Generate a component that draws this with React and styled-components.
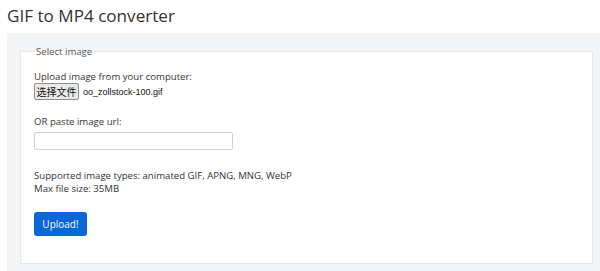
import React from "react";
import styled, { createGlobalStyle } from "styled-components";

const GlobalStyle = createGlobalStyle`
  html, body {
    margin: 0;
    padding: 0;
    background: #ffffff;
    overflow: hidden;
  }
  body {
    font-family: "Open Sans", "Noto Sans", sans-serif;
    color: #333333;
  }
`;

const Page = styled.div`
  padding: 4px 0 0 7px;
  width: 600px;
`;

const Title = styled.h1`
  margin: 0 0 6px;
  font-size: 17.1px;
  font-weight: 400;
  line-height: 23px;
  color: #333333;
`;

const Panel = styled.div`
  width: 572px;
  background: #f3f4f6;
  padding: 12px 13px 7px;
`;

const Fieldset = styled.fieldset`
  margin: 0;
  background: #ffffff;
  border: 1px solid #e4e6ea;
  padding: 0 13px 27px;
  min-width: 0;
  width: 545px;
`;

const Legend = styled.legend`
  font-size: 9.6px;
  color: #555555;
  padding: 0 2px;
  margin-left: 0;
`;

const Label = styled.div`
  font-size: 9.6px;
  line-height: 13px;
  margin-top: ${(p) => p.$top || 0}px;
`;

const FileRow = styled.div`
  display: flex;
  align-items: center;
  gap: 4px;
  margin-top: 0;
`;

const FileButton = styled.button`
  height: 17px;
  width: 45px;
  padding: 0;
  font-family: "Noto Sans CJK SC", sans-serif;
  font-size: 10px;
  color: #111111;
  background: #e9e9e9;
  border: 1px solid #8f8f8f;
  border-radius: 2px;
`;

const FileName = styled.span`
  font-family: "Liberation Sans", Arial, sans-serif;
  font-size: 9px;
  color: #111111;
`;

const UrlInput = styled.input`
  display: block;
  box-sizing: border-box;
  width: 199px;
  height: 18px;
  margin-top: 4px;
  border: 1px solid #cfd2d6;
  border-radius: 2px;
  background: #ffffff;
`;

const SubmitButton = styled.button`
  display: block;
  margin-top: 17px;
  width: 53px;
  height: 24px;
  padding: 0;
  border: none;
  border-radius: 3px;
  background: #0866d6;
  color: #ffffff;
  font-family: "Open Sans", sans-serif;
  font-size: 10px;
`;

export default function App() {
  return (
    <>
      <GlobalStyle />
      <Page>
        <Title>GIF to MP4 converter</Title>
        <Panel>
          <Fieldset>
            <Legend>Select image</Legend>
            <Label $top={12}>Upload image from your computer:</Label>
            <FileRow>
              <FileButton>选择文件</FileButton>
              <FileName>oo_zollstock-100.gif</FileName>
            </FileRow>
            <Label $top={15}>OR paste image url:</Label>
            <UrlInput type="text" />
            <Label $top={19}>
              Supported image types: animated GIF, APNG, MNG, WebP
              <br />
              Max file size: 35MB
            </Label>
            <SubmitButton>Upload!</SubmitButton>
          </Fieldset>
        </Panel>
      </Page>
    </>
  );
}
